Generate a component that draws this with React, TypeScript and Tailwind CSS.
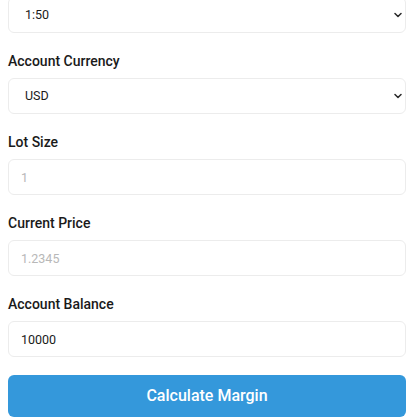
import React from 'react';

const fieldClass =
  'block w-full h-9 rounded-md border border-[#ececec] bg-white px-3 text-[12.5px] text-[#1a1a1a] placeholder:text-[#b8b8b8] outline-none';

const Label: React.FC<{ children: React.ReactNode }> = ({ children }) => (
  <label className="block mt-[18px] mb-[7px] text-sm font-medium leading-5 text-[#1a1a1a]">{children}</label>
);

const Select: React.FC<{ value: string; text: string }> = ({ value, text }) => (
  <div className="relative">
    <select className={`${fieldClass} appearance-none pl-4 pr-6`} defaultValue={value}>
      <option value={value}>{text}</option>
    </select>
    <svg
      className="pointer-events-none absolute right-[4px] top-1/2 -translate-y-1/2"
      width="8"
      height="6"
      viewBox="0 0 8 6"
      fill="none"
    >
      <path d="M1 1.5L4 4.5L7 1.5" stroke="#2a2a2a" strokeWidth="1.5" strokeLinecap="round" strokeLinejoin="round" />
    </svg>
  </div>
);

export default function App() {
  return (
    <div className="min-h-screen bg-white px-2 font-['Roboto',sans-serif] overflow-hidden">
      <div className="-mt-[3px]">
        <Select value="50" text="1:50" />

        <Label>Account Currency</Label>
        <Select value="USD" text="USD" />

        <Label>Lot Size</Label>
        <input className={fieldClass} type="number" placeholder="1" />

        <Label>Current Price</Label>
        <input className={fieldClass} type="number" placeholder="1.2345" />

        <Label>Account Balance</Label>
        <input className={fieldClass} type="number" defaultValue={10000} />

        <button className="mt-[18px] h-[42px] w-full rounded-md bg-[#3498db] text-base font-medium text-white">
          Calculate Margin
        </button>
      </div>
    </div>
  );
}
